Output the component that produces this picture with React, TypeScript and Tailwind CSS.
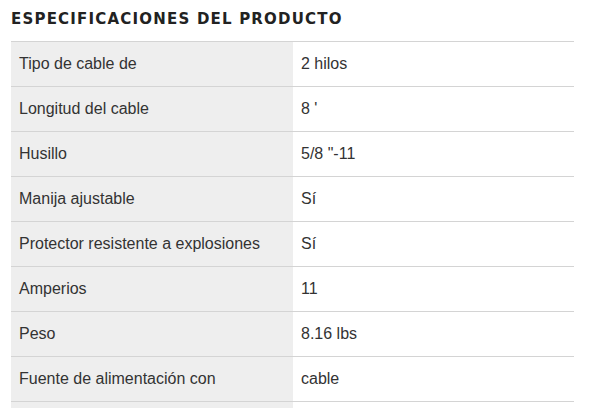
const specs: [string, string][] = [
  ["Tipo de cable de", "2 hilos"],
  ["Longitud del cable", "8 '"],
  ["Husillo", '5/8 "-11'],
  ["Manija ajustable", "Sí"],
  ["Protector resistente a explosiones", "Sí"],
  ["Amperios", "11"],
  ["Peso", "8.16 lbs"],
  ["Fuente de alimentación con", "cable"],
  ["", ""],
];

export default function App() {
  return (
    <div className="h-[408px] w-[593px] overflow-hidden bg-white font-['Liberation_Sans',Arial,sans-serif] text-[#333]">
      <div className="pl-[11px] pr-[19px] pt-[9px]">
        <h2 className="font-['DejaVu_Sans',sans-serif] text-[15px] font-bold uppercase leading-[20px] tracking-[1.2px] text-[#222]">
          Especificaciones del producto
        </h2>
        <table className="mt-[12px] w-full border-collapse text-[16px]">
          <tbody>
            {specs.map(([label, value], i) => (
              <tr key={i} className="h-[45px] border-t border-[#d4d4d4]">
                <td className="w-[282px] bg-[#eeeeee] pl-[8px] pb-[1px] align-middle">{label}</td>
                <td className="pl-[8px] pb-[1px] align-middle">{value}</td>
              </tr>
            ))}
          </tbody>
        </table>
      </div>
    </div>
  );
}
